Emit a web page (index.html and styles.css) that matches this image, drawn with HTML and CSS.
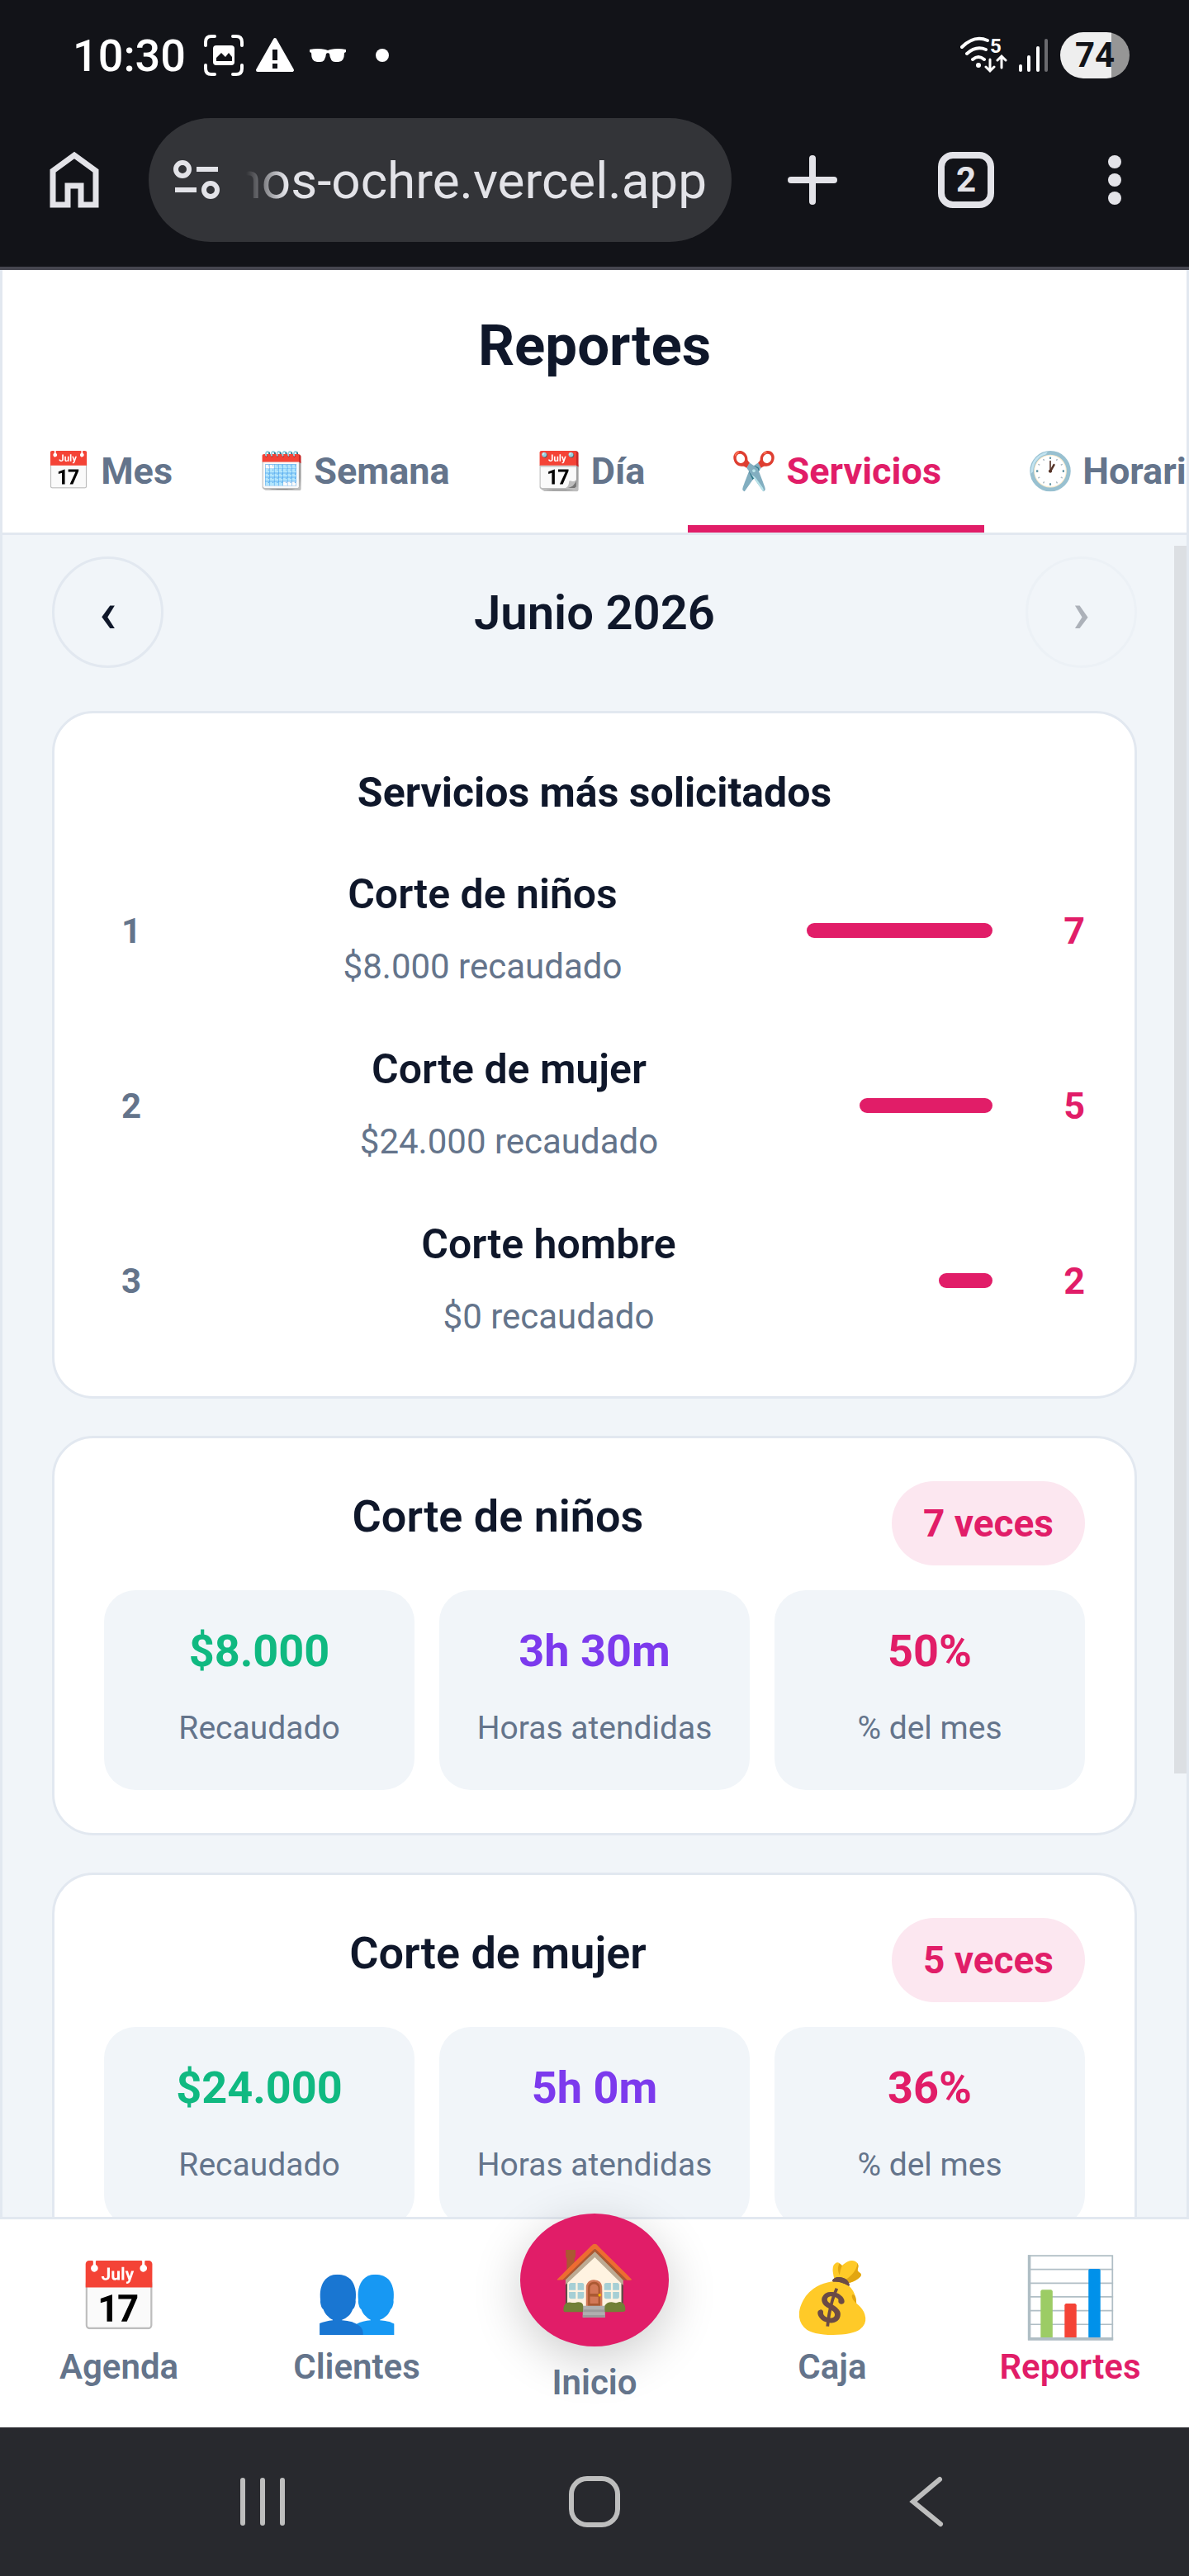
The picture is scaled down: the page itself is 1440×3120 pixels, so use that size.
FILE: index.html
```html
<!DOCTYPE html>
<html lang="es">

<head>
    <meta charset="utf-8">
    <meta name="viewport" content="width=device-width, initial-scale=1">
    <title>Reportes</title>

    <link rel="stylesheet" href="styles.css">
</head>

<body>

    <header class="phone-top">

        <div class="status-bar">
            <span class="clock">10:30</span>
            <svg class="status-capture" width="48" height="50" viewBox="0 0 48 50" fill="none" stroke="#fff" stroke-width="4" stroke-linecap="round">
                <path d="M2 13V9q0-7 7-7h4M35 2h4q7 0 7 7v4M46 37v4q0 7-7 7h-4M13 48H9q-7 0-7-7v-4" />
                <rect x="11" y="13" width="26" height="24" rx="4" fill="#fff" stroke="none" />
                <path d="M15 32v-4l6-6 5 5 4-5 4 5v5z" fill="#121318" stroke="none" />
            </svg>
            <svg class="status-alert" width="48" height="44" viewBox="0 0 48 44">
                <path d="M24 3 45 40H3z" fill="#fff" stroke="#fff" stroke-width="4" stroke-linejoin="round" />
                <path d="M21 15h6v13h-6zM21 32h6v6h-6z" fill="#121318" />
            </svg>
            <svg class="status-glasses" width="44" height="16" viewBox="0 0 44 16" fill="#fff">
                <path d="M0 1q10-2 19 0l3 1 3-1q9-2 19 0v3l-2 1q0 11-7 11h-4q-6 0-7-10l-2-1-2 1q-1 10-7 10H9Q2 16 2 5L0 4z" />
            </svg>
            <span class="status-dot"></span>

            <div class="status-right">
                <svg width="57" height="52" viewBox="0 -4 57 52" fill="none" stroke="#fff" stroke-width="4" stroke-linecap="round">
                    <path d="M2 12Q17-3 33 4M8 20q11-10 23-5M15 27q7-6 14 0" />
                    <circle cx="22" cy="34" r="3" fill="#fff" stroke="none" />
                    <path d="M36 27v14m-5-5 5 5 5-5M50 37V24m-5 4 5-5 5 5" stroke-width="3" />
                    <text class="wifi-text" x="36" y="19">5</text>
                </svg>
                <svg width="36" height="42" viewBox="0 0 36 42" stroke="#fff" stroke-width="4" stroke-linecap="round">
                    <path d="M2 34v5M12 23v16M23 12v27" />
                    <path d="M33 3v36" stroke="#6b6b6f" />
                </svg>
                <span class="battery">74</span>
            </div>
        </div>

        <div class="toolbar">
            <button class="icon-button" type="button" aria-label="Inicio del navegador">
                <svg width="60" height="70" viewBox="0 0 60 70" fill="none" stroke="#e3e3e8" stroke-width="7">
                    <path d="M4 65V24L30 5l26 19v41H38V42H22v23z" />
                    <path d="M26 60h8v10h-8z" fill="#121318" stroke="none" />
                </svg>
            </button>

            <div class="address">
                <svg width="56" height="50" viewBox="0 0 56 50" fill="none" stroke="#e3e3e8" stroke-width="6">
                    <circle cx="11" cy="12" r="8" />
                    <path d="M28 12h26M2 37h26" />
                    <circle cx="45" cy="37" r="8" />
                </svg>
                <input class="address-input" type="text" dir="rtl" value="nos-ochre.vercel.app" aria-label="Dirección">
            </div>

            <div class="toolbar-actions">
                <button class="icon-button" type="button" aria-label="Nueva pestaña">
                    <svg width="60" height="60" viewBox="0 0 60 60" stroke="#e3e3e8" stroke-width="8" stroke-linecap="round">
                        <path d="M30 4v52M4 30h52" />
                    </svg>
                </button>
                <button class="tab-count" type="button" aria-label="Pestañas abiertas">2</button>
                <button class="icon-button" type="button" aria-label="Menú">
                    <svg width="48" height="60" viewBox="0 0 48 60" fill="#e3e3e8">
                        <circle cx="24" cy="8" r="8" />
                        <circle cx="24" cy="30" r="8" />
                        <circle cx="24" cy="52" r="8" />
                    </svg>
                </button>
            </div>
        </div>

    </header>

    <div class="app">

        <div class="app-header">
            <h1>Reportes</h1>

            <nav class="tabs">
                <button class="tab" type="button">📅 Mes</button>
                <button class="tab" type="button">🗓️ Semana</button>
                <button class="tab" type="button">📆 Día</button>
                <button class="tab active" type="button">✂️ Servicios</button>
                <button class="tab" type="button">🕐 Horarios</button>
            </nav>
        </div>

        <main class="content">

            <div class="month-nav">
                <button class="round-button" type="button" aria-label="Mes anterior">‹</button>
                <h2>Junio 2026</h2>
                <button class="round-button" type="button" aria-label="Mes siguiente" disabled>›</button>
            </div>

            <section class="card">
                <h3 class="card-title">Servicios más solicitados</h3>

                <ol class="ranking">
                    <li class="ranking-row">
                        <span class="rank">1</span>
                        <div class="service">
                            <strong>Corte de niños</strong>
                            <span>$8.000 recaudado</span>
                        </div>
                        <div class="bar" style="width: 225px"></div>
                        <span class="count">7</span>
                    </li>
                    <li class="ranking-row">
                        <span class="rank">2</span>
                        <div class="service">
                            <strong>Corte de mujer</strong>
                            <span>$24.000 recaudado</span>
                        </div>
                        <div class="bar" style="width: 161px"></div>
                        <span class="count">5</span>
                    </li>
                    <li class="ranking-row">
                        <span class="rank">3</span>
                        <div class="service">
                            <strong>Corte hombre</strong>
                            <span>$0 recaudado</span>
                        </div>
                        <div class="bar" style="width: 65px"></div>
                        <span class="count">2</span>
                    </li>
                </ol>
            </section>

            <section class="card">
                <div class="card-head">
                    <h3>Corte de niños</h3>
                    <span class="badge">7 veces</span>
                </div>
                <div class="stats">
                    <div class="stat">
                        <strong class="green">$8.000</strong>
                        <span>Recaudado</span>
                    </div>
                    <div class="stat">
                        <strong class="purple">3h 30m</strong>
                        <span>Horas atendidas</span>
                    </div>
                    <div class="stat">
                        <strong class="pink">50%</strong>
                        <span>% del mes</span>
                    </div>
                </div>
            </section>

            <section class="card">
                <div class="card-head">
                    <h3>Corte de mujer</h3>
                    <span class="badge">5 veces</span>
                </div>
                <div class="stats">
                    <div class="stat">
                        <strong class="green">$24.000</strong>
                        <span>Recaudado</span>
                    </div>
                    <div class="stat">
                        <strong class="purple">5h 0m</strong>
                        <span>Horas atendidas</span>
                    </div>
                    <div class="stat">
                        <strong class="pink">36%</strong>
                        <span>% del mes</span>
                    </div>
                </div>
            </section>

            <div class="scroll-thumb"></div>

        </main>

    </div>

    <nav class="bottom-nav">
        <a class="nav-item" href="#agenda">
            <span class="nav-icon">📅</span>
            Agenda
        </a>
        <a class="nav-item" href="#clientes">
            <span class="nav-icon">👥</span>
            Clientes
        </a>
        <a class="nav-item nav-home" href="#inicio">
            <span class="nav-circle">🏠</span>
            Inicio
        </a>
        <a class="nav-item" href="#caja">
            <span class="nav-icon">💰</span>
            Caja
        </a>
        <a class="nav-item active" href="#reportes">
            <span class="nav-icon">📊</span>
            Reportes
        </a>
    </nav>

    <div class="system-bar">
        <button class="icon-button" type="button" aria-label="Recientes">
            <svg width="62" height="62" viewBox="0 0 62 62" stroke="#bebebe" stroke-width="6" stroke-linecap="round">
                <path d="M7 5v52M31 5v52M55 5v52" />
            </svg>
        </button>
        <button class="icon-button" type="button" aria-label="Inicio">
            <svg width="62" height="62" viewBox="0 0 62 62" fill="none" stroke="#bebebe" stroke-width="6">
                <rect x="3" y="3" width="56" height="56" rx="19" />
            </svg>
        </button>
        <button class="icon-button" type="button" aria-label="Atrás">
            <svg width="62" height="62" viewBox="0 0 62 62" fill="none" stroke="#bebebe" stroke-width="6" stroke-linecap="round">
                <path d="M47 4 15 31l33 27" />
            </svg>
        </button>
    </div>

</body>

</html>
```

FILE: styles.css
```css
* {
    margin: 0;
    padding: 0;
    box-sizing: border-box;
}

body {
    height: 100vh;
    display: flex;
    flex-direction: column;
    font-family: Roboto, "Liberation Sans", sans-serif;
    color: #0f172a;
    background-color: #f1f5f9;
}

button,
input {
    font-family: inherit;
    color: inherit;
    background: none;
    border: none;
}

svg {
    display: block;
}

.icon-button {
    display: block;
    flex-shrink: 0;
}

/* phone status bar and browser toolbar */

.phone-top {
    background-color: #121318;
    border-bottom: 4px solid #46464f;
    color: #fff;
}

.status-bar {
    display: flex;
    align-items: center;
    height: 134px;
    padding: 0 72px 0 88px;
}

.clock {
    font-size: 54px;
    font-weight: 500;
}

.status-capture {
    margin-left: 22px;
}

.status-alert {
    margin-left: 14px;
}

.status-glasses {
    margin-left: 18px;
}

.status-dot {
    width: 16px;
    height: 16px;
    margin-left: 36px;
    border-radius: 50%;
    background-color: #fff;
}

.status-right {
    display: flex;
    align-items: center;
    gap: 14px;
    margin-left: auto;
}

.wifi-text {
    font-size: 24px;
    font-weight: 700;
    fill: #fff;
    stroke: none;
}

.battery {
    width: 84px;
    height: 56px;
    border-radius: 28px;
    background: linear-gradient(to right, #eee 74%, #969696 74%);
    color: #121318;
    font-size: 42px;
    font-weight: 700;
    line-height: 56px;
    text-align: center;
}

.toolbar {
    display: flex;
    align-items: center;
    padding: 9px 66px 30px 60px;
}

.address {
    flex: 1;
    min-width: 0;
    display: flex;
    align-items: center;
    gap: 32px;
    height: 150px;
    margin: 0 68px 0 60px;
    padding: 0 30px;
    border-radius: 75px;
    background-color: #333438;
}

.address svg {
    flex-shrink: 0;
}

.address-input {
    flex: 1;
    min-width: 0;
    height: 90px;
    color: #e3e3e8;
    font-size: 62px;
    outline: 0;
    -webkit-mask-image: linear-gradient(to right, transparent, #000 48px);
    mask-image: linear-gradient(to right, transparent, #000 48px);
}

.toolbar-actions {
    display: flex;
    align-items: center;
    gap: 122px;
}

.tab-count {
    width: 68px;
    height: 68px;
    border: 8px solid #e3e3e8;
    border-radius: 18px;
    color: #e3e3e8;
    font-size: 42px;
    font-weight: 700;
    line-height: 52px;
}

/* app */

.app {
    flex: 1;
    min-height: 0;
    display: flex;
    flex-direction: column;
    border-left: 3px solid #e2e8f0;
    border-right: 3px solid #e2e8f0;
}

.app-header {
    padding-top: 52px;
    background-color: #fff;
    border-bottom: 3px solid #e2e8f0;
}

.app-header h1 {
    margin-bottom: 47px;
    font-size: 69px;
    line-height: 80px;
    text-align: center;
}

.tabs {
    display: flex;
    overflow: hidden;
}

.tab {
    flex-shrink: 0;
    padding: 38px 52px;
    border-bottom: 9px solid transparent;
    color: #64748b;
    font-size: 45px;
    font-weight: 700;
    line-height: 54px;
    white-space: nowrap;
}

.tab.active {
    color: #e11d68;
    border-bottom-color: #e11d68;
}

.content {
    position: relative;
    flex: 1;
    min-height: 0;
    overflow: hidden;
    padding: 26px 60px;
}

.month-nav {
    display: flex;
    align-items: center;
    justify-content: space-between;
    margin-bottom: 52px;
}

.month-nav h2 {
    font-size: 58px;
    line-height: 80px;
    font-weight: 600;
}

.round-button {
    width: 135px;
    height: 135px;
    border: 3px solid #e2e8f0;
    border-radius: 50%;
    font-size: 70px;
    font-weight: 500;
}

.round-button:disabled {
    opacity: .3;
}

.card {
    margin-bottom: 45px;
    padding: 52px 60px;
    background-color: #fff;
    border: 3px solid #e2e8f0;
    border-radius: 50px;
}

.card-title {
    margin-bottom: 35px;
    font-size: 50px;
    font-weight: 700;
    line-height: 88px;
    text-align: center;
}

.ranking {
    display: flex;
    flex-direction: column;
    gap: 36px;
    list-style: none;
}

.ranking-row {
    display: flex;
    align-items: center;
}

.rank {
    width: 66px;
    color: #64748b;
    font-size: 42px;
    font-weight: 700;
    text-align: center;
}

.service {
    flex: 1;
    display: flex;
    flex-direction: column;
    text-align: center;
    line-height: 88px;
}

.service strong {
    font-size: 50px;
    font-weight: 600;
}

.service span {
    color: #64748b;
    font-size: 42px;
}

.bar {
    height: 18px;
    border-radius: 9px;
    background-color: #e11d68;
}

.count {
    width: 112px;
    color: #e11d68;
    font-size: 45px;
    font-weight: 700;
    text-align: right;
}

.card-head {
    display: flex;
    align-items: flex-start;
    margin-bottom: 30px;
}

.card-head h3 {
    flex: 1;
    font-size: 54px;
    font-weight: 600;
    line-height: 86px;
    text-align: center;
}

.badge {
    padding: 0 38px;
    border-radius: 51px;
    background-color: #fce7f0;
    color: #e11d68;
    font-size: 46px;
    font-weight: 700;
    line-height: 102px;
}

.stats {
    display: grid;
    grid-template-columns: repeat(3, 1fr);
    gap: 30px;
}

.stat {
    display: flex;
    flex-direction: column;
    gap: 6px;
    padding: 32px 0 30px;
    border-radius: 38px;
    background-color: #f1f5f9;
    text-align: center;
}

.stat strong {
    font-size: 54px;
    line-height: 84px;
}

.stat span {
    color: #64748b;
    font-size: 39px;
    line-height: 90px;
}

.green {
    color: #10b981;
}

.purple {
    color: #7c3aed;
}

.pink {
    color: #e11d68;
}

.scroll-thumb {
    position: absolute;
    top: 13px;
    right: 0;
    width: 15px;
    height: 73%;
    background-color: #dcdfe3;
}

/* bottom navigation */

.bottom-nav {
    position: relative;
    display: grid;
    grid-template-columns: repeat(5, 1fr);
    height: 255px;
    background-color: #fff;
    border-top: 3px solid #e2e8f0;
}

.nav-item {
    display: flex;
    flex-direction: column;
    align-items: center;
    padding-top: 45px;
    color: #64748b;
    font-size: 42px;
    font-weight: 600;
    line-height: 60px;
    text-decoration: none;
}

.nav-item.active {
    color: #e11d68;
}

.nav-icon {
    height: 104px;
    font-size: 82px;
    font-weight: 400;
    line-height: 100px;
}

.nav-item.active .nav-icon {
    font-size: 94px;
}

.nav-item.nav-home {
    padding-top: 0;
}

.nav-circle {
    width: 180px;
    height: 161px;
    margin: -7px 0 14px;
    border-radius: 50%;
    background-color: #e11d68;
    box-shadow: 0 15px 60px rgba(0, 0, 0, .2);
    font-size: 82px;
    font-weight: 400;
    line-height: 161px;
    text-align: center;
}

.system-bar {
    display: flex;
    justify-content: space-around;
    align-items: center;
    height: 180px;
    padding: 0 117px;
    background-color: #28292e;
}
```
